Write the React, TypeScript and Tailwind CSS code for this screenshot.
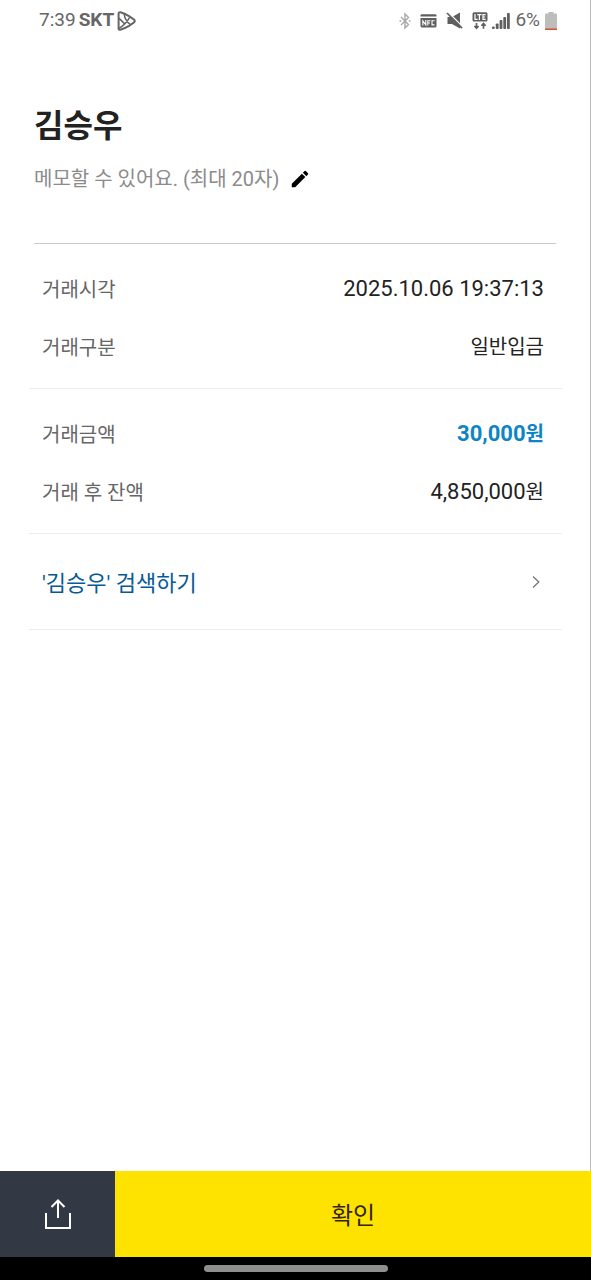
import type { ReactNode } from "react";

function PlayBadge() {
  return (
    <svg width="19" height="20" viewBox="0 0 19 20" fill="none" stroke="#666" strokeWidth="2" strokeLinejoin="round" strokeLinecap="round" aria-hidden="true">
      <path d="M1.6 3Q1.4 1 3.4 1.2Q7.6 2.4 11.6 4.8L17 8.6Q18.6 10 17 11.4L11.6 15.2Q7.6 17.6 3.4 18.8Q1.4 19 1.6 17Z" />
      <path d="M7.2 3.4Q8 9.6 13.4 13.6M2.2 17.4Q9 13 12.8 6.2M2.4 7.6L7.4 12.6" strokeWidth="1.5" />
    </svg>
  );
}

function Bluetooth() {
  return (
    <svg width="12" height="18" viewBox="0 0 12 18" fill="none" stroke="#a8a8a8" strokeWidth="1.4" aria-hidden="true">
      <path d="M2 5L9.5 12.5L6 16V2L9.5 5.5L2 13" />
      <path d="M0.5 9H2.2M9.8 9H11.5" />
    </svg>
  );
}

function Nfc() {
  return (
    <svg width="17" height="14" viewBox="0 0 17 14" aria-hidden="true">
      <path d="M0.5 2.4V1.6Q0.5 0.2 2 0.2H15Q16.5 0.2 16.5 1.6V2.4Z" fill="#5f5f5f" />
      <path d="M0.5 4H16.5V12Q16.5 13.6 15 13.6H2Q0.5 13.6 0.5 12Z" fill="#5f5f5f" />
      <path d="M2.8 11.6V6.8L5.8 10.8V6M7.8 11.6V6.7H10.4M7.8 9H10M14.5 6.7H12V10.9H14.5" fill="none" stroke="#fff" strokeWidth="1.1" />
    </svg>
  );
}

function Muted() {
  return (
    <svg width="17" height="17" viewBox="0 0 17 17" aria-hidden="true">
      <path d="M1.5 5H6L14 0.5V16.5L6 12H1.5Z" fill="#5f5f5f" />
      <path d="M2.4 0.4L16.8 15" stroke="#fff" strokeWidth="1.4" />
      <path d="M1 1L16 16.2" stroke="#5f5f5f" strokeWidth="1.7" />
    </svg>
  );
}

function Lte() {
  return (
    <svg width="16" height="18" viewBox="0 0 16 18" aria-hidden="true">
      <rect x="0.5" y="0.2" width="15" height="9.3" rx="1.5" fill="#5f5f5f" />
      <path d="M3 2V7.4H5.6M5.2 2.6H9.6M7.4 2.6V7.9M13.6 2.6H11V7.4H13.6M11 5H13.2" fill="none" stroke="#fff" strokeWidth="1.2" />
      <path d="M4.5 11V15.6M2.4 14L4.5 16.3L6.6 14M11.5 16.8V12.2M9.4 13.8L11.5 11.5L13.6 13.8" fill="none" stroke="#5f5f5f" strokeWidth="1.7" />
    </svg>
  );
}

function Signal() {
  return (
    <svg width="18" height="18" viewBox="0 0 18 18" fill="#5f5f5f" aria-hidden="true">
      <rect x="0" y="14.5" width="2.6" height="2.5" rx="0.8" />
      <rect x="3.8" y="11.5" width="2.8" height="5.5" rx="0.8" />
      <rect x="7.6" y="8" width="2.8" height="9" rx="0.8" />
      <rect x="11.3" y="5" width="2.8" height="12" rx="0.8" />
      <rect x="15" y="1" width="2.8" height="16" rx="0.8" />
    </svg>
  );
}

function Battery() {
  return (
    <svg width="12" height="18" viewBox="0 0 12 18" aria-hidden="true">
      <path d="M3.5 0H8.5V1.4H11Q12 1.4 12 2.4V17.2H0V2.4Q0 1.4 1 1.4H3.5Z" fill="#bdbdbd" />
      <rect x="0" y="16.4" width="12" height="1.6" rx="0.6" fill="#d4512c" />
    </svg>
  );
}

function StatusBar() {
  return (
    <header className="flex h-[41px] items-center justify-between pr-[33px] pl-[39px] text-[19px] text-[#666]">
      <div className="flex items-center gap-[3px]">
        <span>7:39</span>
        <span className="font-bold">SKT</span>
        <PlayBadge />
      </div>
      <div className="flex items-center">
        <div className="flex items-center gap-[9px] pr-1">
          <Bluetooth />
          <Nfc />
          <Muted />
          <Lte />
        </div>
        <Signal />
        <span className="px-[5px]">6%</span>
        <Battery />
      </div>
    </header>
  );
}

function Row({ label, children }: { label: string; children: ReactNode }) {
  return (
    <div className="flex h-[58px] items-center justify-between">
      <dt className="pt-1 text-xl text-[#666]">{label}</dt>
      <dd className="text-[22px] text-[#222]">{children}</dd>
    </div>
  );
}

export default function App() {
  return (
    <div className="flex min-h-screen flex-col bg-black font-['Roboto','Noto_Sans_CJK_KR',sans-serif]" lang="ko">
      <div className="flex flex-1 flex-col border-r border-[#bcbcbc] bg-white">
        <StatusBar />
        <main className="flex-1 pt-[65px] pr-7 pl-[29px]">
          <section className="mr-[6px] ml-[5px] border-b border-[#c8c8c8] pb-[49px]">
            <h1 className="text-[32px] leading-10 font-bold text-[#222]">김승우</h1>
            <div className="flex items-center gap-[10px] pt-[18px]">
              <p className="text-xl leading-[30px] text-[#8b8b8b]">메모할 수 있어요. (최대 20자)</p>
              <button type="button" aria-label="메모 수정">
                <svg width="22" height="22" viewBox="0 0 24 24" fill="#000" aria-hidden="true">
                  <path d="M3 17.25V21h3.75L17.81 9.94l-3.75-3.75L3 17.25zM20.71 7.04a1 1 0 0 0 0-1.41l-2.34-2.34a1 1 0 0 0-1.41 0l-1.83 1.83 3.75 3.75 1.83-1.83z" />
                </svg>
              </button>
            </div>
          </section>
          <dl className="border-b border-[#ececec] pt-[15px] pr-[18px] pb-[13px] pl-[13px]">
            <Row label="거래시각">2025.10.06 19:37:13</Row>
            <Row label="거래구분">
              <span className="text-xl">일반입금</span>
            </Row>
          </dl>
          <dl className="border-b border-[#ececec] pt-[15px] pr-[18px] pb-[13px] pl-[13px]">
            <Row label="거래금액">
              <span className="font-bold text-[#0d84c6]">
                30,000<span className="text-xl">원</span>
              </span>
            </Row>
            <Row label="거래 후 잔액">
              4,850,000<span className="text-xl">원</span>
            </Row>
          </dl>
          <a href="#search" className="flex h-24 items-center justify-between border-b border-[#ececec] pr-[21px] pl-[13px] text-[22px] text-[#075a94]">
            <span className="pt-1">'김승우' 검색하기</span>
            <svg width="10" height="14" viewBox="0 0 10 14" fill="none" stroke="#777" strokeWidth="1.3" aria-hidden="true">
              <path d="M2 1.5L7.8 7L2 12.5" />
            </svg>
          </a>
        </main>
      </div>
      <footer className="flex h-[86px] shrink-0">
        <button type="button" aria-label="공유" className="flex w-[115px] items-center justify-center bg-[#333845]">
          <svg width="28" height="32" viewBox="0 0 28 32" fill="none" stroke="#fff" strokeWidth="2" aria-hidden="true">
            <path d="M2 15V30H26V15M14 20V2.5M7.5 9L14 2.5L20.5 9" />
          </svg>
        </button>
        <button type="button" className="flex-1 bg-[#fee300] pt-1 text-2xl text-[#33250f]">
          확인
        </button>
      </footer>
      <div className="flex h-[23px] shrink-0 items-center justify-center">
        <div className="h-[7px] w-[184px] rounded-full bg-[#8f8f8f]" />
      </div>
    </div>
  );
}
